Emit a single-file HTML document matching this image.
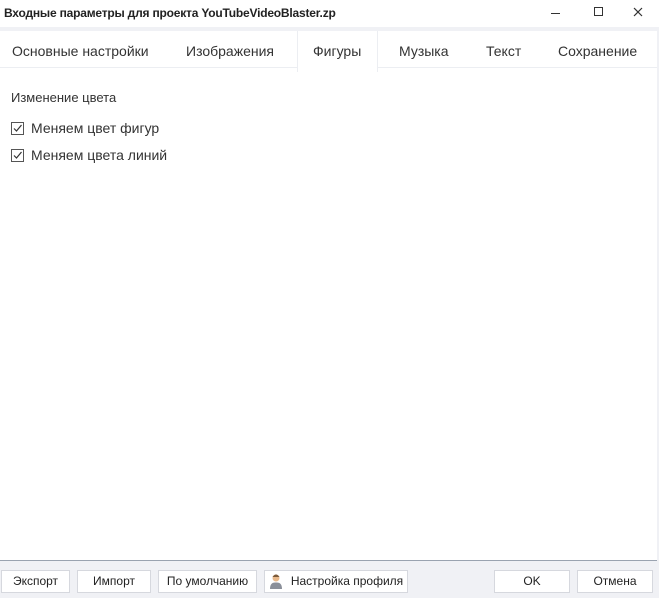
<!DOCTYPE html>
<html><head><meta charset="utf-8"><style>
*{margin:0;padding:0;box-sizing:border-box}
body{width:659px;height:598px;background:#f0f1f5;font-family:"Liberation Sans","DejaVu Sans",sans-serif;position:relative;overflow:hidden;color:#222}
.title{position:absolute;left:0;top:0;width:659px;height:27px;background:#fff}
.title span{position:absolute;left:4px;top:6px;font-size:12px;font-weight:bold;letter-spacing:-0.2px}
.main{position:absolute;left:0;top:31px;width:657px;height:529px;background:#fff}
.tabline{position:absolute;left:0;top:36px;width:657px;height:1px;background:#eceef2}
.sel{position:absolute;left:297px;top:0;width:81px;height:41px;border-left:1px solid #eceef2;border-right:1px solid #eceef2;background:#fff}
.tab{position:absolute;top:12px;font-size:14px;color:#333}
.lbl{position:absolute;font-size:13px;color:#333}
.cb{position:absolute;left:11px;width:13px;height:13px;border:1px solid #555;background:#fff}
.sep{position:absolute;left:0;top:560px;width:657px;height:1px;background:#9aa3b0}
.btn{position:absolute;top:570px;height:23px;background:#fff;border:1px solid #d6d8de;font-size:12px;text-align:center;line-height:21px;color:#222}
.ctl{position:absolute;top:4px;font-size:14px;color:#222}
</style></head><body>
<div class="title"><span>Входные параметры для проекта YouTubeVideoBlaster.zp</span>
<div style="position:absolute;left:551px;top:13px;width:9px;height:1px;background:#333"></div>
<div style="position:absolute;left:594px;top:7px;width:9px;height:9px;border:1px solid #333"></div>
<svg style="position:absolute;left:633px;top:7px" width="10" height="10"><path d="M1 1L9 9M9 1L1 9" stroke="#333" stroke-width="1.2"/></svg>
</div>
<div class="main">
<div class="tabline"></div>
<div class="sel"></div>
<div class="tab" style="left:12px">Основные настройки</div>
<div class="tab" style="left:186px">Изображения</div>
<div class="tab" style="left:313px">Фигуры</div>
<div class="tab" style="left:399px">Музыка</div>
<div class="tab" style="left:486px">Текст</div>
<div class="tab" style="left:558px">Сохранение</div>
<div class="lbl" style="left:11px;top:59px">Изменение цвета</div>
<div class="cb" style="top:91px"><svg width="11" height="11" style="position:absolute;left:0;top:0"><path d="M2 5.5L4.5 8L9.5 2" stroke="#333" stroke-width="1.2" fill="none"/></svg></div>
<div class="lbl" style="left:31px;top:89px;font-size:14px">Меняем цвет фигур</div>
<div class="cb" style="top:118px"><svg width="11" height="11" style="position:absolute;left:0;top:0"><path d="M2 5.5L4.5 8L9.5 2" stroke="#333" stroke-width="1.2" fill="none"/></svg></div>
<div class="lbl" style="left:31px;top:116px;font-size:14px">Меняем цвета линий</div>
</div>
<div class="sep"></div>
<div class="btn" style="left:1px;width:69px">Экспорт</div>
<div class="btn" style="left:77px;width:74px">Импорт</div>
<div class="btn" style="left:158px;width:99px">По умолчанию</div>
<div class="btn" style="left:264px;width:144px;padding-left:22px">Настройка профиля
<svg style="position:absolute;left:4px;top:2px" width="14" height="17"><circle cx="7" cy="5" r="3.5" fill="#e8b88a"/><path d="M3.5 4Q7 -1 10.5 4" fill="#7a5a3a"/><path d="M1 16Q1 9 7 9.5Q13 9 13 16Z" fill="#8a8f99"/></svg></div>
<div class="btn" style="left:494px;width:76px">OK</div>
<div class="btn" style="left:577px;width:76px">Отмена</div>
</body></html>
